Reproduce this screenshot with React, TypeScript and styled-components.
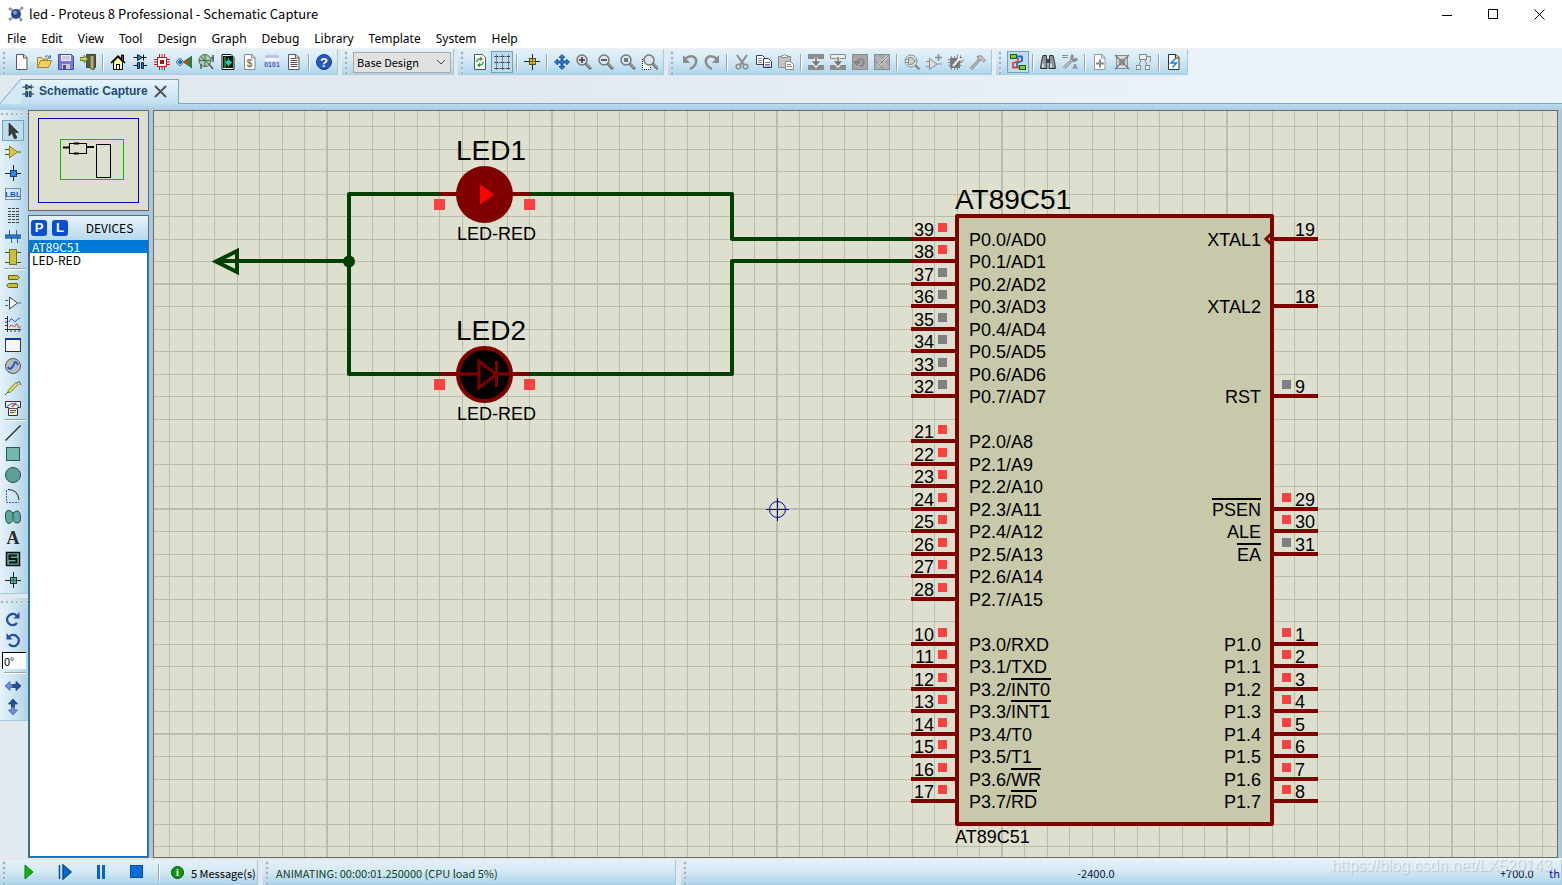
import React from "react";
import styled, { createGlobalStyle, css } from "styled-components";

const GlobalStyle = createGlobalStyle`
  * { box-sizing: border-box; }
  html, body { margin: 0; padding: 0; }
  body { font-family: "Noto Sans", "Open Sans", sans-serif; font-size: 12px; color: #000; }
  button, input, select { font: inherit; color: inherit; margin: 0; }
  ul { list-style: none; margin: 0; padding: 0; }
`;

const narrowFont = `"Noto Sans CJK SC", "Open Sans", sans-serif`;

/* ---------- shell ---------- */

const Window = styled.div`
  position: relative;
  display: flex;
  flex-direction: column;
  height: 100vh;
  min-height: 600px;
  overflow: hidden;
  background: linear-gradient(90deg, #e1e8ee 0%, #e1e8ee 30%, #eaf2fa 80%);
`;

const TitleBar = styled.header`
  display: flex;
  align-items: center;
  height: 28px;
  padding-left: 8px;
  background: #fff;
`;

const Title = styled.h1`
  flex: 1;
  margin: 0;
  padding-left: 5px;
  font-family: ${narrowFont};
  font-size: 13px;
  line-height: 16px;
  font-weight: 400;
`;

const CaptionButton = styled.button`
  display: flex;
  align-items: center;
  justify-content: center;
  width: 46px;
  height: 26px;
  padding: 0;
  border: 0;
  background: none;
`;

const MenuBar = styled.nav`
  display: flex;
  gap: 15px;
  height: 21px;
  padding-left: 7px;
  background: #fff;
  border-bottom: 1px solid #f0f0f0;
`;

const MenuItem = styled.button`
  padding: 0;
  border: 0;
  background: none;
  line-height: 22px;
  white-space: nowrap;
`;

const ToolbarRow = styled.div`
  display: flex;
  gap: 4px;
  height: 26px;
`;

const glossy = "linear-gradient(180deg, #e4f1f9 0%, #d6eaf5 40%, #b4d8ec 90%, #a6cbdf 100%)";

const ToolGroup = styled.div`
  display: flex;
  align-items: center;
  height: 26px;
  padding-right: 2px;
  background: ${glossy};
  border-right: 1px solid #a5c8da;
`;

const Grip = styled.span<{ $row?: boolean }>`
  flex: none;
  ${(p) =>
    p.$row
      ? css`
          width: 28px;
          height: 10px;
          background: radial-gradient(circle at 2px 4px, #a9bac5 1px, #fff 2px, transparent 2px) 0 0 / 5px 8px repeat-x;
        `
      : css`
          width: 11px;
          height: 23px;
          background: radial-gradient(circle at 4px 2px, #9fb2bf 1px, #fff 2px, transparent 2px) 0 0 / 8px 5px repeat-y;
        `}
`;

const Divider = styled.span<{ $row?: boolean }>`
  flex: none;
  ${(p) =>
    p.$row
      ? css`
          width: 22px;
          height: 2px;
          margin: 1px 0 1px 4px;
          border-top: 1px solid #98a4ac;
          border-bottom: 1px solid #fff;
        `
      : css`
          width: 2px;
          height: 17px;
          margin: 0 3px;
          border-left: 1px solid #98a4ac;
          border-right: 1px solid #fff;
        `}
`;

const ToolButton = styled.button<{ $on?: boolean; $short?: boolean }>`
  flex: none;
  display: flex;
  align-items: center;
  justify-content: center;
  width: 22px;
  height: ${(p) => (p.$short ? 21 : 22)}px;
  padding: 0;
  border: 1px solid ${(p) => (p.$on ? "#6fa3bf" : "transparent")};
  background: ${(p) => (p.$on ? "#bfdcec" : "none")};
  svg { flex: none; }
`;

const DesignSelect = styled.select`
  width: 98px;
  height: 21px;
  padding: 0 20px 0 3px;
  appearance: none;
  border: 1px solid #a9a9a9;
  border-radius: 0;
  font-family: ${narrowFont};
  font-size: 11px;
  background: #e1e1e1;
`;

const SelectBox = styled.label`
  position: relative;
  display: flex;
  svg { position: absolute; right: 5px; top: 7px; pointer-events: none; }
`;

/* ---------- tabs ---------- */

const TabRow = styled.div`
  display: flex;
  align-items: flex-end;
  height: 29px;
  border-bottom: 1px solid #7aa7c4;
`;

const Tab = styled.div`
  display: flex;
  align-items: stretch;
  height: 25px;
  margin-bottom: -1px;
`;

const TabBody = styled.div`
  display: flex;
  align-items: center;
  width: 158px;
  padding-bottom: 2px;
  border-top: 1px solid #7aa7c4;
  border-right: 1px solid #7aa7c4;
  background: linear-gradient(180deg, #e8f4fb, #bfdef1);
`;

const TabLabel = styled.button`
  display: flex;
  align-items: center;
  gap: 4px;
  padding: 0;
  border: 0;
  background: none;
  font: bold 12px/16px "Liberation Sans", Arial, sans-serif;
  color: #264b70;
  white-space: nowrap;
`;

const TabClose = styled.button`
  display: flex;
  margin-left: 6px;
  padding: 0;
  border: 0;
  background: none;
`;

const TabStrip = styled.div`
  height: 6px;
  background: linear-gradient(180deg, #bcdcf0, #a9cce3);
`;

/* ---------- work area ---------- */

const Work = styled.main`
  flex: 1;
  display: flex;
  min-height: 0;
`;

const Sidebar = styled.aside`
  display: flex;
  flex-direction: column;
  gap: 4px;
  width: 28px;
`;

const SideGroup = styled.div`
  display: flex;
  flex-direction: column;
  padding: 0 0 3px;
  background: linear-gradient(90deg, #e4f1f9 0%, #d3e8f4 40%, #b1d3e7 100%);
  border-bottom: 1px solid #a5c8da;
  ${ToolButton} { margin-left: 2px; }
`;

const AngleInput = styled.input`
  width: 24px;
  height: 17px;
  margin: 2px 0 2px 2px;
  padding: 0 1px;
  border: 0;
  border-top: 1px solid #000;
  border-left: 1px solid #000;
  border-radius: 0;
  background: #fff;
  font-family: ${narrowFont};
  font-size: 11px;
`;

const ObjectColumn = styled.div`
  display: flex;
  flex-direction: column;
  gap: 4px;
  width: 125px;
  padding-right: 4px;
  background: #abc9de;
`;

const Preview = styled.div`
  height: 101px;
  border: 1px solid #696969;
  background: #dfdfcf;
  svg { display: block; }
`;

const Devices = styled.section`
  flex: 1;
  display: flex;
  flex-direction: column;
  border: 1px solid #696969;
  background: #fff;
`;

const DevicesHead = styled.header`
  display: flex;
  align-items: center;
  height: 24px;
  padding-left: 2px;
  gap: 5px;
  background: linear-gradient(180deg, #e6f3fb, #b7d9ee);
`;

const LetterButton = styled.button`
  width: 16px;
  height: 16px;
  padding: 0;
  border: 0;
  border-radius: 3px;
  background: #0a4ed6;
  color: #fff;
  font: bold 13px/16px "Liberation Sans", Arial, sans-serif;
  text-align: center;
`;

const DevicesTitle = styled.h2`
  flex: 1;
  margin: 0;
  padding-right: 2px;
  font-family: ${narrowFont};
  font-size: 12px;
  line-height: 16px;
  font-weight: 400;
  text-align: center;
`;

const DeviceList = styled.ul`
  flex: 1;
  border: 1px solid #0078d7;
  border-top: 0;
`;

const DeviceItem = styled.li<{ $selected?: boolean }>`
  padding-left: 2px;
  font-family: ${narrowFont};
  font-size: 12px;
  line-height: 13px;
  color: ${(p) => (p.$selected ? "#fff" : "#000")};
  background: ${(p) => (p.$selected ? "#0078d7" : "none")};
`;

const CanvasFrame = styled.section`
  flex: 1;
  min-width: 0;
  padding-right: 4px;
  background: #abc9de;
`;

const Canvas = styled.div`
  height: 100%;
  overflow: hidden;
  border: 1px solid #696969;
  background: #dfdfcf;
  svg { display: block; width: 100%; height: 100%; }
`;

/* ---------- status ---------- */

const StatusRow = styled.footer`
  display: flex;
  gap: 5px;
  height: 27px;
  padding-top: 2px;
`;

const StatusGroup = styled.div<{ $grow?: boolean; $width?: number }>`
  display: flex;
  align-items: center;
  ${(p) => (p.$grow ? "flex: 1;" : "flex: none;")}
  ${(p) => (p.$width ? `width: ${p.$width}px;` : "")}
  background: ${glossy};
  border-right: 1px solid #a5c8da;
  font-family: ${narrowFont};
  font-size: 11px;
  line-height: 16px;
  white-space: nowrap;
`;

const RunButton = styled.button`
  flex: none;
  display: flex;
  align-items: center;
  justify-content: center;
  width: 36px;
  height: 24px;
  padding: 0 0 2px;
  border: 0;
  background: none;
`;

const Message = styled.button`
  display: flex;
  align-items: center;
  gap: 7px;
  padding: 0 0 0 8px;
  border: 0;
  background: none;
`;

const Animating = styled.span`
  padding-left: 2px;
  color: #103c1c;
`;

const CoordX = styled.span`
  flex: 1;
  text-align: center;
  color: #101040;
`;

const CoordY = styled.span`
  width: 49px;
  color: #101040;
`;

const Unit = styled.span`
  width: 12px;
  color: #101090;
`;

const Watermark = styled.span`
  position: absolute;
  right: 10px;
  bottom: 9px;
  font: 16px/20px "Liberation Sans", Arial, sans-serif;
  color: rgba(255, 255, 255, 0.6);
  text-shadow: 1px 1px 1px rgba(120, 130, 140, 0.4);
  pointer-events: none;
`;

/* ---------- icons ---------- */

const G = "#8b8b8b";
const LG = "#c4c4c4";

const Glyph = styled.text<{ $size: number; $serif?: boolean }>`
  font: bold ${(p) => p.$size}px ${(p) => (p.$serif ? `"Liberation Serif", serif` : `"Liberation Sans", sans-serif`)};
  text-anchor: middle;
`;

const sheet = (stroke = "#5a5a5a") => (
  <path d="M2.500 .5h7.500l3 3v12h-10.500zM9.500 .5v3.500h3.500" fill="#fbfbfb" stroke={stroke} />
);
const lens = (
  <>
    <path d="M9.500 9.500l5.500 5.500" stroke="#6b6b6b" strokeWidth="3" />
    <path d="M10 9.500l4.500 4.500" stroke="#c9c9c9" strokeWidth="1" />
    <circle cx="6" cy="6" r="5" fill="#dbe6ec" stroke="#777" strokeWidth="1.500" />
  </>
);

const icons: Record<string, React.ReactNode> = {
  new: sheet(),
  open: (
    <>
      <path d="M1.500 13.500v-10h4l1 1.500h5v2" fill="#f6df8d" stroke="#a98222" />
      <path d="M1.500 13.500l3-7h11l-3 7z" fill="#f3cf63" stroke="#a98222" />
      <path d="M9 2.500q3-2 5 1M14.500 1v3h-3" fill="none" stroke="#3a6ea5" />
    </>
  ),
  save: (
    <>
      <path d="M.5 .5h13l2 2v13h-15z" fill="#7c78d4" stroke="#4a469c" />
      <rect x="3" y="1" width="10" height="6" fill="#eef" />
      <path d="M4 3h8M4 5h8" stroke="#aab" />
      <rect x="4" y="10" width="8" height="5" fill="#ccd" />
      <rect x="5" y="11" width="3" height="4" fill="#4a469c" />
    </>
  ),
  exit: (
    <>
      <path d="M6.500 .5h9v13h-9z" fill="#56604e" stroke="#3d4630" />
      <path d="M10 2l4-1v15l-4-2z" fill="#b4ae72" stroke="#4d4a28" />
      <path d="M0 3.500h4v-2l4 3.500-4 3.500v-2h-4z" fill="#c4d860" stroke="#66762a" />
    </>
  ),
  home: (
    <>
      <path d="M3.500 8v7.500h9v-7.500l-4.500-5z" fill="#fff7a0" stroke="#000" />
      <path d="M1 9l7-7 7 7" fill="none" stroke="#000" strokeWidth="1.500" />
      <path d="M11.500 5v-4h2v6" fill="#c33" stroke="#000" />
      <rect x="6.500" y="10.500" width="3" height="5" fill="#fff" stroke="#000" />
    </>
  ),
  schematic: (
    <>
      <path d="M1.500 3.500h13M1.500 11.500h4M11 11.500h4" stroke="#111" />
      <path d="M11.500 .5v6" stroke="#111" />
      <path d="M5.500 .5v6l5-3z" fill="#2f86d8" stroke="#123" />
      <path d="M5.500 8.500h2v6h-2zM9.500 8.500h2v6h-2z" fill="#2f86d8" stroke="#123" />
    </>
  ),
  chip: (
    <>
      <path d="M5.500 0v16M8 0v16M10.500 0v16M0 5.500h16M0 8h16M0 10.500h16" stroke="#d01818" />
      <rect x="3.500" y="3.500" width="9" height="9" fill="#fff" stroke="#d01818" />
      <rect x="6" y="6" width="4" height="4" fill="#b01010" />
    </>
  ),
  view3d: (
    <>
      <path d="M0 8l3-3.500q4 0 3 3.500 1 3.500-3 3.500z" fill="#a8dcee" stroke="#246" strokeWidth=".7" />
      <circle cx="4" cy="8" r="2" fill="#1d6f9c" />
      <path d="M7 8l9-6v12z" fill="#1f8a44" stroke="#0f5a2a" strokeWidth=".6" />
      <path d="M8 8l4.500-3v6z" fill="#e03030" />
    </>
  ),
  gerber: (
    <>
      <circle cx="7" cy="6.500" r="6" fill="#a9cfae" stroke="#4a6b50" />
      <path d="M1 6.500h12M7 1v12M3 3l8 7" stroke="#4a6b50" fill="none" />
      <path d="M3 10v5M11 10l4 5M15 1v7M13 4h3" stroke="#555" strokeWidth="1.500" />
    </>
  ),
  explorer: (
    <>
      <path d="M2 .5h9l3 3v12h-12z" fill="#fff" stroke="#111" />
      <rect x="3" y="2" width="10" height="12" fill="#021a08" />
      <path d="M5 3v11M5 8.500h7M8.500 4v9" stroke="#18e048" />
      <circle cx="8.500" cy="8.500" r="2.500" fill="#20c8d0" />
    </>
  ),
  bom: (
    <>
      {sheet("#8a8a8a")}
      <Glyph x="7.500" y="13" $size={10} fill="#8a7a3a">$</Glyph>
    </>
  ),
  source: (
    <>
      <rect x="1" y="1" width="14" height="3" fill="#b9c4ee" />
      <rect x="1" y="4" width="14" height="3" fill="#f4f6ff" />
      <Glyph x="8" y="13" $size={7} fill="#4c55c8">0101</Glyph>
    </>
  ),
  report: (
    <>
      {sheet()}
      <path d="M4.500 4.500h5M4.500 6.500h7M4.500 8.500h7M4.500 10.500h7M4.500 12.500h7" stroke="#555" />
    </>
  ),
  help: (
    <>
      <circle cx="8" cy="8" r="7.500" fill="#2459c4" stroke="#173d90" />
      <Glyph x="8" y="13" $size={13} fill="#fff">?</Glyph>
    </>
  ),
  refresh: (
    <>
      <path d="M2.500 .5h8l3 3v12h-11z" fill="#fff" stroke="#555" />
      <path d="M5 8q0-3.500 4-3M11 8q0 3.500-4 3" fill="none" stroke="#2f9a2f" strokeWidth="1.500" />
      <path d="M8 2.500l3 2.500-3 2zM8 8.800l-3 2.200 3 2.500z" fill="#2f9a2f" />
    </>
  ),
  grid: (
    <path
      d="M.5 2.500h15M.5 8.500h15M.5 14.500h15M2.500 .5v15M8.500 .5v15M14.500 .5v15M1 2.500h3M7 2.500h3M13 2.500h3M1 8.500h3M7 8.500h3M13 8.500h3M1 14.500h3M7 14.500h3M13 14.500h3"
      stroke="#333"
      strokeDasharray="1 1"
    />
  ),
  origin: (
    <>
      <path d="M8.500 0v16M0 7.500h16" stroke="#222" />
      <rect x="5.500" y="4.500" width="6" height="6" fill="#c8bc2a" stroke="#55501a" />
      <path d="M8.500 5v5M6 7.500h5" stroke="#777020" />
    </>
  ),
  pan: (
    <path
      d="M8 .5l3 3h-2v3.500h3.500v-2l3 3-3 3v-2h-3.500v3.500h2l-3 3-3-3h2v-3.500h-3.500v2l-3-3 3-3v2h3.500v-3.500h-2z"
      fill="#2b7bd8"
      stroke="#143f7c"
      strokeWidth=".8"
    />
  ),
  zoomIn: (<>{lens}<path d="M3 6h6M6 3v6" stroke="#333" strokeWidth="1.500" /></>),
  zoomOut: (<>{lens}<path d="M3 6h6" stroke="#333" strokeWidth="1.500" /></>),
  zoomAll: (<>{lens}<rect x="4" y="4" width="4" height="4" fill="#777" /></>),
  zoomArea: (
    <>
      <path d="M.5 5v10.500h8v-3" fill="#fff" stroke="#222" strokeDasharray="1 1" />
      <g transform="translate(1 0)">{lens}</g>
    </>
  ),
  undo: (
    <>
      <path d="M3 5q4-3.500 8-2.500 4 2 3 6-1 4-6 6.500" fill="none" stroke={G} strokeWidth="2.500" />
      <path d="M1 1v8h7z" fill={G} />
    </>
  ),
  redo: (
    <>
      <path d="M13 5q-4-3.500-8-2.500-4 2-3 6 1 4 6 6.500" fill="none" stroke={G} strokeWidth="2.500" />
      <path d="M15 1v8h-7z" fill={G} />
    </>
  ),
  cut: (
    <>
      <path d="M3 1l7 10M13 1l-7 10" stroke={G} strokeWidth="2" />
      <circle cx="4.500" cy="12.500" r="2.300" fill="none" stroke={G} strokeWidth="1.500" />
      <circle cx="11.500" cy="12.500" r="2.300" fill="none" stroke={G} strokeWidth="1.500" />
    </>
  ),
  copy: (
    <>
      <path d="M.5 1.500h6l2 2v7h-8z" fill="#fff" stroke="#3c4258" />
      <path d="M2 4.500h4M2 6.500h4M2 8.500h4" stroke="#889" />
      <path d="M7.500 4.500h5l3 3v6h-8z" fill="#fff" stroke="#2c3350" />
      <path d="M9 8.500h5M9 10.500h5M9 12h5" stroke="#779" />
    </>
  ),
  paste: (
    <>
      <path d="M.5 2.500h12v11h-12z" fill={LG} stroke={G} />
      <path d="M3.500 3.500v-2h2q1-2 2 0h2v2z" fill="#eee" stroke={G} />
      <path d="M7.500 7.500h5l3 3v5h-8z" fill="#f4f4f4" stroke={G} />
      <path d="M9 10.500h4M9 12.500h5" stroke={G} />
    </>
  ),
  blockCopy: (
    <>
      <path d="M0 0h16v5h-16zM0 11h16v5h-16z" fill={G} />
      <path d="M8 3v8M5 8.500l3 3.500 3-3.500" fill="none" stroke="#eee" strokeWidth="3" />
      <path d="M8 3v7M5.500 8l2.500 3 2.500-3z" fill="#777" stroke="#777" strokeWidth="1.500" />
    </>
  ),
  blockMove: (
    <>
      <path d="M.5 .5h15v4h-15z" fill="#e6eef2" stroke={G} />
      <path d="M0 11h16v5h-16z" fill={G} />
      <path d="M8 3v8M5 8.500l3 3.500 3-3.500" fill="none" stroke="#eee" strokeWidth="3" />
      <path d="M8 3v7M5.500 8l2.500 3 2.500-3z" fill="#777" stroke="#777" strokeWidth="1.500" />
    </>
  ),
  blockRotate: (
    <>
      <rect x=".5" y=".5" width="15" height="15" fill="#a6a6a6" stroke={G} />
      <path d="M5 8q1-3.500 4.500-3 3 1 2.500 4-1 3-4 3M2.500 8h5l-2.500 3z" fill="none" stroke="#7c7c7c" strokeWidth="1.300" />
    </>
  ),
  blockDelete: (
    <>
      <rect x=".5" y=".5" width="15" height="15" fill="#a6a6a6" stroke={G} />
      <path d="M2 2l12 12M14 2l-12 12" stroke="#d2d2d2" strokeWidth="2.500" />
      <path d="M2 2l12 12M14 2l-12 12" stroke="#808080" />
    </>
  ),
  pick: (
    <>
      <path d="M10 10l5.500 5.500" stroke={G} strokeWidth="2.500" />
      <circle cx="7" cy="7" r="6" fill="#e0e8ec" stroke={G} />
      <path d="M4.500 3.500h2.500q3.500 0 3.500 3.500t-3.500 3.500h-2.500zM1 5.500h3.500M1 8.500h3.500M10.500 7h2.500" fill="#ccc" stroke={G} />
    </>
  ),
  make: (
    <>
      <path d="M3.500 4.500v11l7.500-5.500zM0 7.500h3.500M0 12.500h3.500M11 10h5" fill="#ddd" stroke={G} />
      <path d="M12.500 0v7M9 3.500h7" stroke={G} strokeWidth="1.500" />
    </>
  ),
  packaging: (
    <>
      <path d="M3.500 2v14M6.500 2v14M9.500 2v14M0 5.500h14M0 8.500h14M0 11.500h14" stroke={G} />
      <rect x="2" y="4" width="10" height="10" fill="#7a7a7a" />
      <path d="M5 12l6.500-7.500M11 1q-1 4 1 4.500t3.500-1.500" fill="none" stroke="#777" strokeWidth="4" />
      <path d="M5 12l6.500-7.500M11 1q-1 4 1 4.500t3.500-1.500" fill="none" stroke="#eee" strokeWidth="2.200" />
    </>
  ),
  decompose: (
    <>
      <path d="M1 15l9-10" stroke={G} strokeWidth="3" />
      <path d="M1.500 14.500l8-9" stroke="#ddd" />
      <path d="M7 2.500q4-2.500 6 1l2.500 3-2 1.500-2.500-2.500-2 1z" fill={LG} stroke={G} />
    </>
  ),
  autoroute: (
    <>
      <path d="M6 2.500h6v4.500l-5 2v4h3" fill="none" stroke="#2b5fd0" strokeWidth="1.800" strokeLinejoin="round" />
      <path d="M8 4v3.500l-5 1.500v4.500h7" fill="none" stroke="#e0402a" strokeWidth="1.800" strokeLinejoin="round" />
      <rect x=".5" y=".5" width="6" height="4" fill="#6fd040" stroke="#205a18" />
      <rect x="9.500" y="11.500" width="6" height="4" fill="#6fd040" stroke="#205a18" />
    </>
  ),
  find: (
    <>
      <path d="M3 1.500h3.500v4.500l.5 8.500h-6.500l1-7zM13 1.500h-3.500v4.500l-.5 8.500h6.500l-1-7z" fill="#8c949a" stroke="#333" />
      <path d="M6.500 5h3v4h-3z" fill="#444" />
      <path d="M3 9.500v4M11 9.500v4" stroke="#e8eef2" strokeWidth="1.500" />
    </>
  ),
  property: (
    <>
      <path d="M0 1.500h6M0 3.500h6" stroke={G} />
      <path d="M2 14l8-8M11 1q-2 2-.5 4.500t4.500-1" fill="none" stroke={G} strokeWidth="3" />
      <path d="M2 14l8-8" stroke="#e4e4e4" />
      <Glyph x="13" y="15" $size={7} fill="#808080">A</Glyph>
    </>
  ),
  newSheet: (<>{sheet("#9a9a9a")}<path d="M8 5.500v8M4 9.500h8" stroke={G} strokeWidth="2" /></>),
  removeSheet: (
    <>
      <rect x="2.500" y="1.500" width="11" height="13" fill="#d5dde2" stroke={G} />
      <circle cx="8" cy="8" r="3" fill="#bbb" stroke={G} />
      <path d="M1 1l14 14M15 1l-14 14" stroke="#777" strokeWidth="1.300" />
    </>
  ),
  hierarchy: (
    <>
      <rect x="3.500" y=".5" width="7" height="5" fill="#eee" stroke={G} />
      <path d="M5 6l-2 5M9 6l2 5M13 2q3 3 1 6M11 2.500h4" fill="none" stroke={G} />
      <rect x=".5" y="11.500" width="4" height="4" fill="#eee" stroke={G} />
      <rect x="9.500" y="11.500" width="4" height="4" fill="#eee" stroke={G} />
    </>
  ),
  erc: (<>{sheet("#333")}<path d="M10 4l-5 5h5.500l-4 4.500" fill="none" stroke="#1c83d8" strokeWidth="1.500" /></>),
  select: (<path d="M4 0v13l3-3 2.500 6 2.500-1.200-2.600-5.300h4.100z" fill="#3b3b3b" stroke="#1c1c1c" strokeWidth=".6" />),
  component: (
    <>
      <path d="M0 5.500h5M0 10.500h5M12 8h4" stroke="#55501a" />
      <path d="M4.500 2v12l8-6z" fill="#d8cc3e" stroke="#8a8220" />
    </>
  ),
  junction: (
    <>
      <path d="M8.500 0v16M0 8.500h16" stroke="#222" />
      <rect x="5.500" y="5.500" width="6" height="6" fill="#2f86e0" stroke="#123f80" />
    </>
  ),
  label: (
    <>
      <rect x=".5" y="2.500" width="15" height="11" fill="none" stroke="#333" strokeDasharray="1 1" />
      <Glyph x="8" y="11" $size={8} fill="#1558b0">LBL</Glyph>
    </>
  ),
  script: (
    <path d="M3 1.500h11M3 4.500h11M3 7.500h11M3 9.500h11M3 12.500h11M3 15.500h11" stroke="#444" strokeDasharray="3 1" />
  ),
  bus: (
    <>
      <path d="M4.500 9v-7M11.500 9v-7M6.500 8v7M12.500 8v7" stroke="#1e62c8" />
      <path d="M0 8.500h16" stroke="#123f80" strokeWidth="4" />
      <path d="M0 8.500h16" stroke="#2f86e0" strokeWidth="2" />
    </>
  ),
  subcircuit: (
    <>
      <path d="M0 3.500h16M0 13.500h16" stroke="#55501a" />
      <rect x="4.500" y=".5" width="7" height="15" fill="#ccc03a" stroke="#77701e" />
    </>
  ),
  terminal: (
    <>
      <path d="M3.500 1.500h9l2 2-2 2h-9z" fill="#ccc03a" stroke="#66601a" />
      <path d="M12.500 9.500h-9l-2 2 2 2h9z" fill="#ccc03a" stroke="#66601a" />
    </>
  ),
  pin: (
    <>
      <path d="M4.500 2v12l8-6z" fill="#eef3f6" stroke="#444" />
      <path d="M0 5.500h3M0 10.500h3M13 8h3" stroke="#0c8080" />
    </>
  ),
  graph: (
    <>
      <path d="M2.500 0v16M0 13.500h16M0 2.500h2M0 6h2M0 9.500h2M6 14v2M10 14v2M14 14v2" stroke="#333" />
      <path d="M4 6q2-5 4-2t3 1 4-3" fill="none" stroke="#1e62c8" />
      <path d="M4 11q2-3 4-1t3-1 2 1 3 0" fill="none" stroke="#d84a1c" />
    </>
  ),
  tape: (
    <>
      <rect x=".5" y="1.500" width="15" height="13" fill="#f4f4f4" stroke="#333" />
      <rect x="0" y="1" width="16" height="2" fill="#0a3c9c" />
    </>
  ),
  generator: (
    <>
      <circle cx="8" cy="8" r="7.500" fill="#b6bcc4" stroke="#555" />
      <path d="M3 9q1.500 3 3.500 1t3-5 3.500 2" fill="none" stroke="#1e52b8" strokeWidth="1.800" />
    </>
  ),
  probe: (
    <>
      <path d="M0 16l4-4M12 4q3-4 3.500 2" fill="none" stroke="#555" />
      <path d="M3.500 13.500l-.5-2 8-8 2 2-8 8z" fill="#e8e060" stroke="#77701e" />
    </>
  ),
  instrument: (
    <>
      <path d="M.5 1.500h15v6h-3v8h-9v-8h-3z" fill="#eee" stroke="#333" />
      <path d="M2 6.500q6-6 12 0" fill="none" stroke="#1e62c8" />
      <path d="M7 7l4-4" stroke="#d83a1c" strokeWidth="1.500" />
      <path d="M3 8.500h10M5 10.500h6M5 12.500h6" stroke="#555" />
      <rect x="9" y="11" width="2" height="2" fill="#e8d020" />
    </>
  ),
  line: (<path d="M.5 15.500l15-15" stroke="#222" strokeWidth="1.300" />),
  box: (<rect x="1.500" y="1.500" width="13" height="13" fill="#73b5b0" stroke="#2c5552" />),
  circle: (<circle cx="8" cy="8" r="7.500" fill="#5f9f9b" stroke="#2c4a48" />),
  arc: (
    <>
      <path d="M1.500 2v12.500h12.500" fill="none" stroke="#1e62c8" strokeDasharray="2 1" />
      <path d="M3 1.500q10 0 11 10.500" fill="none" stroke="#222" />
    </>
  ),
  path: (<path d="M8 4q-2-3-5-2.500t-2.500 6.500 2.500 6.500 5-3q2 3 5 2.500t2.500-6-2.500-6-5 2zM8 4v7" fill="#5fa8a2" stroke="#2c4a48" />),
  text: (<Glyph x="8" y="14" $size={18} $serif fill="#2b2b2b">A</Glyph>),
  symbol: (
    <>
      <rect x="1.500" y="1.500" width="13" height="13" fill="#5fa8a2" stroke="#111" strokeWidth="1.500" />
      <path d="M12 4.500h-7.500v3.500h7v3.500h-7.500" fill="none" stroke="#111" strokeWidth="2" />
    </>
  ),
  marker: (
    <>
      <path d="M8.500 0v16M0 8.500h16" stroke="#222" />
      <rect x="5.500" y="5.500" width="6" height="6" fill="#5fa8a2" stroke="#234" />
      <path d="M8.500 6v5M6 8.500h5" stroke="#2c6a66" />
    </>
  ),
  rotateCw: (
    <>
      <path d="M12 12q-3 3.500-7 1.500-4-3-2.500-7 2.500-4.500 7-3.500l2.500 2" fill="none" stroke="#264f9c" strokeWidth="2.200" />
      <path d="M14.500 1v6.500h-6z" fill="#264f9c" />
    </>
  ),
  rotateCcw: (
    <>
      <path d="M4 12q3 3.500 7 1.500 4-3 2.500-7-2.500-4.500-7-3.500l-2.500 2" fill="none" stroke="#264f9c" strokeWidth="2.200" />
      <path d="M1.500 1v6.500h6z" fill="#264f9c" />
    </>
  ),
  flipH: (
    <>
      <path d="M0 8l5-4.500v3h3v3h-3v3z" fill="#6d92dc" stroke="#3a5fa8" strokeWidth=".8" />
      <path d="M16 8l-5-4.500v3h-3v3h3v3z" fill="#22509c" stroke="#173a74" strokeWidth=".8" />
    </>
  ),
  flipV: (
    <>
      <path d="M8 0l4.500 5h-3v3h-3v-3h-3z" fill="#22509c" stroke="#173a74" strokeWidth=".8" />
      <path d="M8 16l4.500-5h-3v-3h-3v3h-3z" fill="#6d92dc" stroke="#3a5fa8" strokeWidth=".8" />
    </>
  ),
};

const Icon = ({ name, size = 16 }: { name: string; size?: number }) => (
  <svg width={size} height={size} viewBox="0 0 16 16" fill="none" aria-hidden="true">
    {icons[name]}
  </svg>
);

/* "|" stands for a divider between buttons; a leading "*" marks a pressed button */
const Tools = ({ items, row }: { items: string; row?: boolean }) => (
  <>
    {items.split(" ").map((item, i) => {
      if (item === "|") return <Divider key={i} $row={row} />;
      const name = item.replace("*", "");
      return (
        <ToolButton key={i} $on={item[0] === "*"} $short={row} aria-label={name}>
          <Icon name={name} />
        </ToolButton>
      );
    })}
  </>
);

/* ---------- schematic ---------- */

const WIRE = "#004000";
const PART = "#800000";
const HIGH = "#ff4040";
const FLOAT = "#808080";

const SmallText = styled.text`
  font: 18px "Liberation Sans", Arial, sans-serif;
  fill: #000;
`;
const LargeText = styled.text`
  font: 28px "Liberation Sans", Arial, sans-serif;
  fill: #000;
`;

type Pin = { y: number; num: string; name: string; level?: string; bar?: [number, number] };

const run = (ys: number[], from: number, step: number, names: string[], level: string): Pin[] =>
  ys.map((y, i) => ({ y, num: String(from + step * i), name: names[i], level }));

const leftPins: Pin[] = [
  ...run([239, 261], 39, -1, ["P0.0/AD0", "P0.1/AD1"], HIGH),
  ...run([284, 306, 329, 351, 374, 396], 37, -1, ["P0.2/AD2", "P0.3/AD3", "P0.4/AD4", "P0.5/AD5", "P0.6/AD6", "P0.7/AD7"], FLOAT),
  ...run([441, 464, 486, 509, 531, 554, 576, 599], 21, 1, ["P2.0/A8", "P2.1/A9", "P2.2/A10", "P2.3/A11", "P2.4/A12", "P2.5/A13", "P2.6/A14", "P2.7/A15"], HIGH),
  { y: 644, num: "10", name: "P3.0/RXD", level: HIGH },
  { y: 666, num: "11", name: "P3.1/TXD", level: HIGH },
  { y: 689, num: "12", name: "P3.2/INT0", level: HIGH, bar: [1011, 40] },
  { y: 711, num: "13", name: "P3.3/INT1", level: HIGH, bar: [1011, 40] },
  { y: 734, num: "14", name: "P3.4/T0", level: HIGH },
  { y: 756, num: "15", name: "P3.5/T1", level: HIGH },
  { y: 779, num: "16", name: "P3.6/WR", level: HIGH, bar: [1011, 30] },
  { y: 801, num: "17", name: "P3.7/RD", level: HIGH, bar: [1011, 26] },
];

const rightPins: Pin[] = [
  { y: 239, num: "19", name: "XTAL1" },
  { y: 306, num: "18", name: "XTAL2" },
  { y: 396, num: "9", name: "RST", level: FLOAT },
  { y: 509, num: "29", name: "PSEN", level: HIGH, bar: [1212, 49] },
  { y: 531, num: "30", name: "ALE", level: HIGH },
  { y: 554, num: "31", name: "EA", level: FLOAT, bar: [1237, 24] },
  ...run([644, 666, 689, 711, 734, 756, 779, 801], 1, 1, ["P1.0", "P1.1", "P1.2", "P1.3", "P1.4", "P1.5", "P1.6", "P1.7"], HIGH),
];

const PinMark = ({ pin, side }: { pin: Pin; side: "left" | "right" }) => {
  const left = side === "left";
  return (
    <g>
      <path d={left ? `M911 ${pin.y}H956` : `M1273 ${pin.y}H1318`} stroke={PART} strokeWidth="4" />
      {pin.level && <rect x={left ? 938 : 1282} y={pin.y - 16} width="9" height="9" fill={pin.level} />}
      <SmallText x={left ? 934 : 1295} y={pin.y - 3} textAnchor={left ? "end" : "start"}>{pin.num}</SmallText>
      <SmallText x={left ? 969 : 1261} y={pin.y + 7} textAnchor={left ? "start" : "end"}>{pin.name}</SmallText>
      {pin.bar && <rect x={pin.bar[0]} y={pin.y - 11} width={pin.bar[1]} height="2" fill="#000" />}
    </g>
  );
};

const Led = ({ y, name, lit }: { y: number; name: string; lit?: boolean }) => (
  <g>
    <path d={`M440 ${y}H530`} stroke={PART} strokeWidth="4" />
    <circle cx="484.500" cy={y + 0.5} r={lit ? 28.5 : 26.5} fill={lit ? PART : "#000"} stroke={PART} strokeWidth={lit ? 0 : 4} />
    {lit ? (
      <path d={`M480 ${y - 10}l14 10.500-14 10z`} fill="#ff0000" />
    ) : (
      <path d={`M458 ${y}H479M479 ${y - 13}v27l17-13.500zM496.500 ${y - 13}v26M497 ${y}H511`} fill="none" stroke={PART} strokeWidth="3" />
    )}
    <rect x="434" y={y + 5} width="11" height="11" fill={HIGH} />
    <rect x="524" y={y + 5} width="11" height="11" fill={HIGH} />
    <LargeText x="456" y={y - 34}>{name}</LargeText>
    <SmallText x="457" y={y + 46}>LED-RED</SmallText>
  </g>
);

const steps = [22, 45, 67, 90, 112, 135, 157, 180, 202];

const Schematic = () => (
  <svg role="img" aria-label="Schematic sheet">
    <defs>
      <pattern id="grid" x="101" y="58" width="225" height="225" patternUnits="userSpaceOnUse">
        <rect width="2" height="225" fill="#bcbcac" />
        <rect width="225" height="2" fill="#bcbcac" />
        {steps.map((s) => (
          <React.Fragment key={s}>
            <rect x={s + 1} width="1" height="225" fill="#bcbcac" />
            <rect y={s + 1} width="225" height="1" fill="#bcbcac" />
          </React.Fragment>
        ))}
      </pattern>
    </defs>
    <g transform="translate(-154 -111)">
      <rect x="154" y="111" width="100%" height="100%" fill="url(#grid)" />
      <g fill="none" stroke="#0000a0">
        <circle cx="777.500" cy="509.500" r="8" />
        <path d="M766 509.500h23M777.500 498v23" />
      </g>
      <g fill="none" stroke={WIRE} strokeWidth="4" strokeLinejoin="round">
        <path d="M440 194H349V374H440M349 261H220M530 194H732V239H912M530 374H732V261H912" />
        <path d="M237 251v21l-21-10.500z" strokeLinejoin="miter" />
      </g>
      <circle cx="349" cy="261.500" r="6" fill={WIRE} />
      <Led y={194} name="LED1" lit />
      <Led y={374} name="LED2" />
      <rect x="957" y="216" width="315" height="608" fill="#c8c8aa" stroke={PART} strokeWidth="4" strokeLinejoin="round" />
      <path d="M1272 233l-6 6 6 6" fill="none" stroke={PART} strokeWidth="3" />
      <LargeText x="955" y="209">AT89C51</LargeText>
      <SmallText x="955" y="843">AT89C51</SmallText>
      {leftPins.map((p) => <PinMark key={p.num} pin={p} side="left" />)}
      {rightPins.map((p) => <PinMark key={p.num} pin={p} side="right" />)}
    </g>
  </svg>
);

/* ---------- page ---------- */

const menus = ["File", "Edit", "View", "Tool", "Design", "Graph", "Debug", "Library", "Template", "System", "Help"];

export default function App() {
  return (
    <Window>
      <GlobalStyle />
      <TitleBar>
        <svg width="16" height="16" viewBox="0 0 16 16" aria-hidden="true">
          <path d="M2 2l12 12M14 2l-12 12" stroke="#9aa3b4" strokeWidth="2" />
          <circle cx="8" cy="8" r="5" fill="#2a4a86" />
          <circle cx="7" cy="6.500" r="2" fill="#7ea0d8" />
          <g fill="#8d93a0">
            <circle cx="2" cy="3" r="1.500" /><circle cx="14" cy="2" r="1.500" />
            <circle cx="2" cy="13" r="1.500" /><circle cx="13" cy="14" r="1.500" />
          </g>
        </svg>
        <Title>led - Proteus 8 Professional - Schematic Capture</Title>
        <CaptionButton aria-label="Minimize">
          <svg width="11" height="11"><path d="M0 6.500h10" stroke="#000" /></svg>
        </CaptionButton>
        <CaptionButton aria-label="Maximize">
          <svg width="11" height="11"><rect x=".5" y=".5" width="9" height="9" fill="none" stroke="#000" /></svg>
        </CaptionButton>
        <CaptionButton aria-label="Close">
          <svg width="11" height="11"><path d="M.5 .5l10 10M10.500 .5l-10 10" stroke="#000" /></svg>
        </CaptionButton>
      </TitleBar>
      <MenuBar>
        {menus.map((m) => <MenuItem key={m}>{m}</MenuItem>)}
      </MenuBar>
      <ToolbarRow>
        <ToolGroup>
          <Grip />
          <Tools items="new open save exit | home schematic chip view3d gerber explorer bom source report | help" />
        </ToolGroup>
        <ToolGroup>
          <Grip />
          <SelectBox>
            <DesignSelect aria-label="Design variant">
              <option>Base Design</option>
            </DesignSelect>
            <svg width="10" height="7"><path d="M1 1l4 4 4-4" fill="none" stroke="#444" /></svg>
          </SelectBox>
        </ToolGroup>
        <ToolGroup>
          <Grip />
          <Tools items="refresh *grid | origin | pan zoomIn zoomOut zoomAll zoomArea" />
        </ToolGroup>
        <ToolGroup>
          <Grip />
          <Tools items="undo redo | cut copy paste | blockCopy blockMove blockRotate blockDelete | pick make packaging decompose" />
        </ToolGroup>
        <ToolGroup>
          <Grip />
          <Tools items="*autoroute | find property | newSheet removeSheet hierarchy | erc" />
        </ToolGroup>
      </ToolbarRow>
      <TabRow>
        <Tab>
          <svg width="21" height="25" aria-hidden="true">
            <path d="M0 25L21 0V25z" fill="#d4e9f6" />
            <path d="M0 24.500L20.500 .5H21" fill="none" stroke="#7aa7c4" />
          </svg>
          <TabBody>
            <TabLabel><Icon name="schematic" size={14} />Schematic Capture</TabLabel>
            <TabClose aria-label="Close tab">
              <svg width="13" height="13"><path d="M1 1l11 11M12 1l-11 11" stroke="#555" strokeWidth="2" /></svg>
            </TabClose>
          </TabBody>
        </Tab>
      </TabRow>
      <TabStrip />
      <Work>
        <Sidebar>
          <SideGroup>
            <Grip $row />
            <Tools row items="*select component junction label script bus subcircuit | terminal pin graph tape generator probe instrument | line box circle arc path text symbol marker" />
          </SideGroup>
          <SideGroup>
            <Grip $row />
            <Tools row items="rotateCw rotateCcw" />
            <AngleInput aria-label="Rotation angle" defaultValue="0°" />
            <Tools row items="| flipH flipV" />
          </SideGroup>
        </Sidebar>
        <ObjectColumn>
          <Preview>
            <svg width="119" height="99" fill="none" role="img" aria-label="Sheet overview">
              <rect x="9.500" y="7.500" width="100" height="84" stroke="#0000c0" />
              <rect x="31.500" y="28.500" width="63" height="40" stroke="#00c000" />
              <rect x="40.500" y="32.500" width="17" height="10" stroke="#000" />
              <path d="M34 36.500h6M58 36h7M45 32.500h5M45 42.500h5" stroke="#000" strokeWidth="2" />
              <rect x="67.500" y="33.500" width="14" height="33" stroke="#000" />
            </svg>
          </Preview>
          <Devices>
            <DevicesHead>
              <LetterButton>P</LetterButton>
              <LetterButton>L</LetterButton>
              <DevicesTitle>DEVICES</DevicesTitle>
            </DevicesHead>
            <DeviceList>
              <DeviceItem $selected>AT89C51</DeviceItem>
              <DeviceItem>LED-RED</DeviceItem>
            </DeviceList>
          </Devices>
        </ObjectColumn>
        <CanvasFrame>
          <Canvas><Schematic /></Canvas>
        </CanvasFrame>
      </Work>
      <StatusRow>
        <StatusGroup $width={258}>
          <Grip />
          <RunButton aria-label="Run">
            <svg width="16" height="16"><path d="M4 1v14l8-7z" fill="#0cb40c" stroke="#0a7a0a" /></svg>
          </RunButton>
          <RunButton aria-label="Step">
            <svg width="16" height="16"><path d="M2.500 1v14M6 1v14l8-7z" fill="#0a6cd0" stroke="#0a4c9c" strokeWidth="1.500" /></svg>
          </RunButton>
          <RunButton aria-label="Pause">
            <svg width="16" height="16"><path d="M4 1h3v14h-3zM9 1h3v14h-3z" fill="#0a62c8" /></svg>
          </RunButton>
          <RunButton aria-label="Stop">
            <svg width="16" height="16"><rect x="1.500" y="1.500" width="12" height="12" fill="#0a6cd8" stroke="#0a4c9c" /></svg>
          </RunButton>
          <Divider />
          <Message>
            <svg width="13" height="13" aria-hidden="true">
              <circle cx="6.500" cy="6.500" r="6" fill="#149414" stroke="#0a4a0a" />
              <Glyph x="6.500" y="10" $size={10} $serif fill="#fff">i</Glyph>
            </svg>
            5 Message(s)
          </Message>
        </StatusGroup>
        <StatusGroup $width={413}>
          <Grip />
          <Animating>ANIMATING: 00:00:01.250000 (CPU load 5%)</Animating>
        </StatusGroup>
        <StatusGroup $grow>
          <Grip />
          <CoordX>-2400.0</CoordX>
          <CoordY>+700.0</CoordY>
          <Unit>th</Unit>
        </StatusGroup>
      </StatusRow>
      <Watermark>https://blog.csdn.net/LX520143</Watermark>
    </Window>
  );
}
